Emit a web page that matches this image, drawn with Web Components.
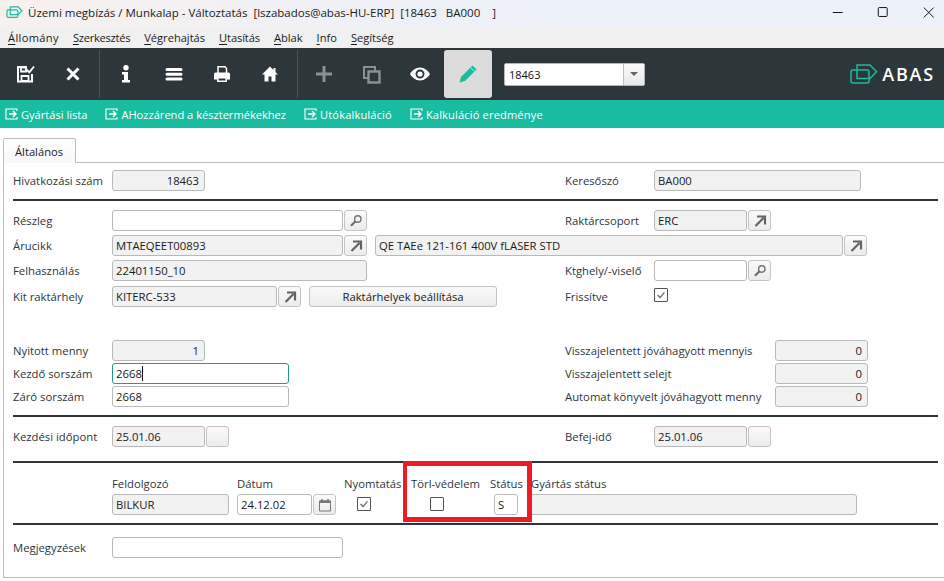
<!DOCTYPE html>
<html>
<head>
<meta charset="utf-8">
<style>
  html, body { margin: 0; padding: 0; height: 100%; overflow: hidden; background: #fff; }
  body { font: 11.3px "Open Sans", "Noto Sans", sans-serif; color: #2c363b; }
</style>
</head>
<body>
<app-titlebar>Üzemi megbízás / Munkalap - Változtatás&nbsp; [lszabados@abas-HU-ERP]&nbsp; [18463&nbsp;&nbsp; BA000&nbsp;&nbsp;&nbsp; ]</app-titlebar>
<app-menubar></app-menubar>
<app-toolbar></app-toolbar>
<action-bar>
  <action-link>Gyártási lista</action-link>
  <action-link>AHozzárend a késztermékekhez</action-link>
  <action-link style="letter-spacing:.15px">Utókalkuláció</action-link>
  <action-link style="letter-spacing:.15px">Kalkuláció eredménye</action-link>
</action-bar>
<tab-panel label="Általános">
  <f-row gap="7">
    <f-label>Hivatkozási szám</f-label><f-field w="93" align="right">18463</f-field>
    <f-label slot="right">Keresőszó</f-label><f-field slot="right" w="207">BA000</f-field>
  </f-row>
  <sep-line gap="8"></sep-line>
  <f-row gap="9">
    <f-label>Részleg</f-label><f-field w="231" kind="edit"></f-field><f-btn icon="search"></f-btn>
    <f-label slot="right">Raktárcsoport</f-label><f-field slot="right" w="93">ERC</f-field><f-btn slot="right" icon="arrow"></f-btn>
  </f-row>
  <f-row gap="4">
    <f-label>Árucikk</f-label><f-field w="231">MTAEQEET00893</f-field><f-btn icon="arrow"></f-btn>
    <f-field w="468" style="margin-left:8px">QE TAEe 121-161 400V fLASER STD</f-field><f-btn icon="arrow"></f-btn>
  </f-row>
  <f-row gap="4">
    <f-label>Felhasználás</f-label><f-field w="255">22401150_10</f-field>
    <f-label slot="right">Ktghely/-viselő</f-label><f-field slot="right" w="93" kind="edit"></f-field><f-btn slot="right" icon="search"></f-btn>
  </f-row>
  <f-row gap="5">
    <f-label>Kit raktárhely</f-label><f-field w="165">KITERC-533</f-field><f-btn icon="arrow"></f-btn>
    <f-button w="188" style="margin-left:8px">Raktárhelyek beállítása</f-button>
    <f-label slot="right">Frissítve</f-label><f-check slot="right" checked style="margin-top:-3px"></f-check>
  </f-row>
  <f-row gap="33">
    <f-label>Nyitott menny</f-label><f-field w="93" align="right">1</f-field>
    <f-label slot="right" w="210">Visszajelentett jóváhagyott mennyis</f-label><f-field slot="right" w="93" align="right">0</f-field>
  </f-row>
  <f-row gap="2">
    <f-label>Kezdő sorszám</f-label><f-field w="177" kind="focus">2668</f-field>
    <f-label slot="right" w="210">Visszajelentett selejt</f-label><f-field slot="right" w="93" align="right">0</f-field>
  </f-row>
  <f-row gap="2">
    <f-label>Záró sorszám</f-label><f-field w="177" kind="edit">2668</f-field>
    <f-label slot="right" w="210">Automat könyvelt jóváhagyott menny</f-label><f-field slot="right" w="93" align="right">0</f-field>
  </f-row>
  <sep-line gap="8"></sep-line>
  <f-row gap="9">
    <f-label>Kezdési időpont</f-label><f-field w="93">25.01.06</f-field><f-btn></f-btn>
    <f-label slot="right">Befej-idő</f-label><f-field slot="right" w="93">25.01.06</f-field><f-btn slot="right"></f-btn>
  </f-row>
  <sep-line gap="14"></sep-line>
  <stack-row>
    <f-col w="125" label="Feldolgozó"><f-field w="117">BILKUR</f-field></f-col>
    <f-col w="107" label="Dátum"><f-field w="75" kind="edit">24.12.02</f-field><f-btn icon="cal"></f-btn></f-col>
    <f-col w="67" label="Nyomtatás"><f-check checked style="margin:-1px 0 0 13px"></f-check></f-col>
    <f-col w="79" label="Törl-védelem"><f-check style="margin:-1px 0 0 19px"></f-check></f-col>
    <f-col w="41" label="Státus"><f-field w="24" kind="edit" style="margin-left:4px">S</f-field></f-col>
    <f-col w="326" label="Gyártás státus"><f-field w="327" style="margin-left:-1px"></f-field></f-col>
    <red-mark></red-mark>
  </stack-row>
  <sep-line gap="8"></sep-line>
  <f-row gap="12">
    <f-label>Megjegyzések</f-label><f-field w="231" kind="edit"></f-field>
  </f-row>
</tab-panel>

<script>
const ICONS = {
  save: '<path d="M12 3H3v14.500h14V10" fill="none" stroke="currentColor" stroke-width="2"/><path d="M6 3.500h5v4H6zM6.500 12h7v5h-7z" fill="none" stroke="currentColor" stroke-width="1.800"/><path d="M11.500 5.500l2.800 2.800L19 2.500" fill="none" stroke="currentColor" stroke-width="1.800"/>',
  close: '<path d="M4.500 4.500l11 11M15.500 4.500l-11 11" stroke="currentColor" stroke-width="3"/>',
  info: '<circle cx="10" cy="3.800" r="2.700" fill="currentColor"/><path d="M6 8h6v8h2v2.500H6V16h2v-5.500H6z" fill="currentColor"/>',
  menu: '<path d="M3 5.500h14M3 10.300h14M3 15h14" stroke="currentColor" stroke-width="3" stroke-linecap="round"/>',
  print: '<path d="M6 9V2.800h7l1.500 1.700V9" fill="none" stroke="currentColor" stroke-width="1.500"/><path d="M3.500 8.500h13A1.500 1.500 0 0 1 18 10v5.500h-3V13H5v2.500H2V10a1.500 1.500 0 0 1 1.500-1.500z" fill="currentColor"/><path d="M5.800 13.800h8.400v3.500H5.800z" fill="none" stroke="currentColor" stroke-width="1.500"/>',
  home: '<path d="M10 2.500L2 10.500h2.500V17.500h4v-5h3v5h4v-7H18L15.500 8V4h-2v2z" fill="currentColor"/>',
  plus: '<path d="M10 2v16M2 10h16" stroke="currentColor" stroke-width="3"/>',
  copy: '<path d="M2 3h11v11H2z" fill="none" stroke="currentColor" stroke-width="2"/><path d="M6.500 7.500h11v11h-11z" fill="#2c363b" stroke="currentColor" stroke-width="2.400"/>',
  eye: '<path fill-rule="evenodd" d="M10 3.500c4.500 0 8 3.200 10 6.500-2 3.300-5.500 6.500-10 6.500S2 13.300 0 10c2-3.300 5.500-6.500 10-6.500zM10 5.500a4.500 4.500 0 1 0 0 9 4.500 4.500 0 0 0 0-9z" fill="currentColor"/><circle cx="10" cy="10" r="2.600" fill="currentColor"/>',
  pencil: '<path d="M14.500 1.500l4 4L7 17 1.500 18.500 3 13z" fill="currentColor"/><path d="M12.500 3.500l4 4" stroke="#dcdcdc" stroke-width="1"/>',
  search: '<circle cx="9.800" cy="6" r="3.200" fill="none" stroke="#767676" stroke-width="1.400"/><path d="M7.500 8.300L3 12.800" stroke="#6c6c6c" stroke-width="2.200"/>',
  arrow: '<path d="M3.500 13L11.500 5M5 3.500h8v8" fill="none" stroke="#5f6468" stroke-width="2.200"/>',
  cal: '<path d="M2.500 4h11v10h-11z" fill="none" stroke="#777" stroke-width="1"/><path d="M2.500 3.500h11v2.500h-11z" fill="#777"/><path d="M5 2v2M11 2v2" stroke="#777" stroke-width="1.500"/>'
};
const ROW_FONT = '"Open Sans", "Noto Sans", sans-serif';

function shadow(el, html) {
  el.attachShadow({ mode: "open" }).innerHTML = html;
}

class AppTitlebar extends HTMLElement {
  connectedCallback() {
    shadow(this, `<style>
      :host { display: flex; align-items: center; height: 28px; padding-left: 6px; font: 11.5px ${ROW_FONT}; color: #1a1a1a; overflow: hidden;
        background: linear-gradient(90deg, #f7f1ee 0, #f0f0f6 35%, #edf1f9 60%, #edf1f9 100%); }
      .ico { width: 17px; height: 12px; margin: 0 5px 4px 0; flex: none; }
      .txt { flex: 1; white-space: nowrap; margin-bottom: 3px; }
      .win { display: flex; flex: none; margin-right: -7px; }
      .win svg { display: block; width: 45.5px; height: 28px; }
    </style>
    <svg class="ico" viewBox="0 0 28 20"><rect x="1.500" y="6.500" width="18" height="12.500" rx="2" fill="none" stroke="#1abc9f" stroke-width="2"/><path d="M7 1.500h13l6.500 6.500-6.500 6.500H7z" fill="none" stroke="#1abc9f" stroke-width="2"/></svg>
    <span class="txt"><slot></slot></span>
    <span class="win">
      <svg viewBox="0 0 46 28"><path d="M18 12.500h10" stroke="#111"/></svg>
      <svg viewBox="0 0 46 28"><rect x="18.500" y="7.500" width="9" height="9" rx="1" fill="none" stroke="#111"/></svg>
      <svg viewBox="0 0 46 28"><path d="M18 7.500l10 10M28 7.500l-10 10" stroke="#111"/></svg>
    </span>`);
  }
}

class AppMenubar extends HTMLElement {
  connectedCallback() {
    // letter-spacing per item, the original font is not the same width for every word
    const items = [["Á","llomány",".35"],["S","zerkesztés","-.25"],["V","égrehajtás","0"],["U","tasítás","-.1"],["A","blak","0"],["I","nfo","0"],["S","egítség","0"]];
    shadow(this, `<style>
      :host { display: flex; gap: 14px; height: 20px; box-sizing: border-box; padding: 0 0 1px 8px; align-items: center; background: #f0f0f0; font: 11.1px ${ROW_FONT}; color: #1a1a1a; }
      u { text-underline-offset: 2px; }
    </style>` + items.map(i => `<span style="letter-spacing:${i[2]}px"><u>${i[0]}</u>${i[1]}</span>`).join(""));
  }
}

class AppToolbar extends HTMLElement {
  connectedCallback() {
    const btn = (n, c) => `<span class="b" style="color:${c || "#fff"}"><svg viewBox="0 0 20 20">${ICONS[n]}</svg></span>`;
    shadow(this, `<style>
      :host { display: flex; align-items: center; height: 52px; background: #2c363b; }
      .group { display: flex; box-sizing: border-box; height: 48px; align-items: center; border-right: 1px solid #4a5357; }
      .b { display: flex; flex: none; width: 48px; height: 48px; align-items: center; justify-content: center; }
      .b svg { width: 20px; height: 20px; }
      .b.active { background: #dcdcdc; border-radius: 3px; }
      .combo { display: flex; width: 141px; height: 23px; margin-left: 12px; background: #fff; border: 1px solid #b5b5b5; border-radius: 2px; font: 11px ${ROW_FONT}; color: #111; align-items: center; box-sizing: border-box; padding-left: 4px; }
      .combo span { flex: 1; }
      .combo i { display: flex; width: 20px; height: 21px; border-left: 1px solid #c0c0c0; background: linear-gradient(#fbfbfb,#e8e8e8); align-items: center; justify-content: center; }
      .combo i::after { content: ""; border: 4px solid transparent; border-top: 4px solid #666; border-bottom: 0; }
      .logo { margin-left: auto; display: flex; align-items: center; gap: 4px; margin-right: 9px; font: 600 18px ${ROW_FONT}; color: #fff; letter-spacing: 1.800px; }
    </style>
    <div class="group" style="width:100px;padding-left:1px">${btn("save")}${btn("close")}</div>
    <div class="group" style="width:198px;padding-left:2px">${btn("info")}${btn("menu")}${btn("print")}${btn("home")}</div>
    <span style="width:2px"></span>
    ${btn("plus", "#8b9092")}${btn("copy", "#8b9092")}${btn("eye")}
    <span class="b active" style="color:#1abc9f"><svg viewBox="0 0 20 20">${ICONS.pencil}</svg></span>
    <div class="combo"><span>18463</span><i></i></div>
    <div class="logo"><svg width="28" height="20" viewBox="0 0 28 20"><rect x="1" y="6" width="18" height="13" rx="2" fill="none" stroke="#1abc9f" stroke-width="1.500"/><path d="M7 1h13l6.500 6.800L20 14.500H7z" fill="none" stroke="#1abc9f" stroke-width="1.500"/></svg>ABAS</div>`);
  }
}

class ActionBar extends HTMLElement {
  connectedCallback() {
    shadow(this, `<style>
      :host { display: flex; height: 28px; align-items: center; gap: 18px; padding-left: 5px; background: #1abc9f; }
    </style><slot></slot>`);
  }
}

class ActionLink extends HTMLElement {
  connectedCallback() {
    shadow(this, `<style>
      :host { display: inline-flex; align-items: center; gap: 3px; color: #fff; font: 11.1px ${ROW_FONT}; white-space: nowrap; }
      svg { width: 13px; height: 12px; }
    </style><svg viewBox="0 0 13 12"><path d="M12 3V1H1v10h11V9" fill="none" stroke="#fff" stroke-width="1.100"/><path d="M4 6h7M8 3l3 3-3 3" fill="none" stroke="#fff" stroke-width="1.400"/></svg><slot></slot>`);
  }
}

class TabPanel extends HTMLElement {
  connectedCallback() {
    shadow(this, `<style>
      :host { display: block; padding: 9px 0 0 3px; }
      .tab { display: inline-flex; align-items: center; height: 25px; box-sizing: border-box; width: 73px; padding-left: 11px; background: linear-gradient(#fff,#f8f8f8); border: 1px solid #bdbdbd; border-bottom: 0; border-radius: 2px 2px 0 0; font: 11.2px ${ROW_FONT}; color: #1a1a1a; position: relative; top: 1px; }
      .body { border-top: 1px solid #bdbdbd; border-left: 1px solid #bdbdbd; border-bottom: 1px solid #bdbdbd; height: 416px; box-sizing: border-box; padding-left: 9px; padding-right: 6px; }
    </style><div class="tab">${this.getAttribute("label")}</div><div class="body"><slot></slot></div>`);
  }
}

class FRow extends HTMLElement {
  connectedCallback() {
    shadow(this, `<style>
      :host { display: flex; height: 21px; align-items: center; margin-top: ${this.getAttribute("gap") || 0}px; }
      .l { display: flex; align-items: center; width: 552px; flex: none; }
      .r { display: flex; align-items: center; }
    </style><div class="l"><slot></slot></div><div class="r"><slot name="right"></slot></div>`);
  }
}

class FLabel extends HTMLElement {
  connectedCallback() {
    const w = this.getAttribute("w") || (this.slot === "right" ? 89 : 99);
    shadow(this, `<style>
      :host { display: block; flex: none; width: ${w}px; font: 11.3px ${ROW_FONT}; color: #2c363b; white-space: nowrap; }
    </style><slot></slot>`);
  }
}

class FField extends HTMLElement {
  connectedCallback() {
    const kind = this.getAttribute("kind") || "ro";
    const bg = kind === "ro" ? "#f2f2f2" : "#fff";
    const bc = kind === "focus" ? "#1f9c86" : "#b9b9b9";
    const caret = kind === "focus" ? `<span class="caret"></span>` : "";
    shadow(this, `<style>
      :host { display: flex; flex: none; box-sizing: border-box; width: ${this.getAttribute("w")}px; height: 21px; padding: 0 3px; align-items: center; justify-content: ${this.getAttribute("align") === "right" ? "flex-end" : "flex-start"}; background: ${bg}; border: 1px solid ${bc}; border-radius: 3px; font: 11.3px ${ROW_FONT}; color: #1a1a1a; white-space: nowrap; overflow: hidden; }
      :host([align=right]) { padding-right: 5px; }
      .caret { width: 1px; height: 15px; background: #111; }
    </style><slot></slot>${caret}`);
  }
}

class FBtn extends HTMLElement {
  connectedCallback() {
    const n = this.getAttribute("icon");
    const svg = n ? `<svg viewBox="0 0 16 16">${ICONS[n]}</svg>` : "";
    shadow(this, `<style>
      :host { display: flex; flex: none; box-sizing: border-box; width: 23px; height: 21px; margin-left: 1px; align-items: center; justify-content: center; background: linear-gradient(#fafafa,#ececec); border: 1px solid #c4c4c4; border-radius: 3px; }
      svg { width: 16px; height: 16px; }
    </style>${svg}`);
  }
}

class FButton extends HTMLElement {
  connectedCallback() {
    shadow(this, `<style>
      :host { display: flex; flex: none; box-sizing: border-box; width: ${this.getAttribute("w")}px; height: 21px; align-items: center; justify-content: center; background: linear-gradient(#fafafa,#ececec); border: 1px solid #c4c4c4; border-radius: 3px; font: 11.3px ${ROW_FONT}; color: #1a1a1a; }
    </style><slot></slot>`);
  }
}

class FCheck extends HTMLElement {
  connectedCallback() {
    const mark = this.hasAttribute("checked") ? `<svg viewBox="0 0 14 14"><path d="M3 7l3 3 5-6" fill="none" stroke="#666" stroke-width="1.500"/></svg>` : "";
    shadow(this, `<style>
      :host { display: block; flex: none; box-sizing: border-box; width: 14px; height: 14px; background: #fff; border: 1px solid #4e5559; border-radius: 1px; }
      svg { display: block; width: 12px; height: 12px; }
    </style>${mark}`);
  }
}

class SepLine extends HTMLElement {
  connectedCallback() {
    shadow(this, `<style>
      :host { display: block; height: 2px; background: #2c363b; margin-top: ${this.getAttribute("gap") || 0}px; }
    </style>`);
  }
}

class StackRow extends HTMLElement {
  connectedCallback() {
    shadow(this, `<style>
      :host { display: flex; position: relative; padding-left: 99px; margin-top: 11px; }
    </style><slot></slot>`);
  }
}

class FCol extends HTMLElement {
  connectedCallback() {
    shadow(this, `<style>
      :host { display: block; flex: none; width: ${this.getAttribute("w")}px; }
      .lab { height: 20px; font: 11.3px/19px ${ROW_FONT}; color: #2c363b; white-space: nowrap; }
      .ctl { display: flex; align-items: center; height: 21px; }
    </style><div class="lab">${this.getAttribute("label")}</div><div class="ctl"><slot></slot></div>`);
  }
}

class RedMark extends HTMLElement {
  connectedCallback() {
    shadow(this, `<style>
      :host { position: absolute; left: 390px; top: -13px; width: 129px; height: 61px; box-sizing: border-box; border: 5px solid #ed1c24; border-left-width: 4px; }
    </style>`);
  }
}

customElements.define("app-titlebar", AppTitlebar);
customElements.define("app-menubar", AppMenubar);
customElements.define("app-toolbar", AppToolbar);
customElements.define("action-bar", ActionBar);
customElements.define("action-link", ActionLink);
customElements.define("tab-panel", TabPanel);
customElements.define("f-row", FRow);
customElements.define("f-label", FLabel);
customElements.define("f-field", FField);
customElements.define("f-btn", FBtn);
customElements.define("f-button", FButton);
customElements.define("f-check", FCheck);
customElements.define("sep-line", SepLine);
customElements.define("stack-row", StackRow);
customElements.define("f-col", FCol);
customElements.define("red-mark", RedMark);
</script>
</body>
</html>
